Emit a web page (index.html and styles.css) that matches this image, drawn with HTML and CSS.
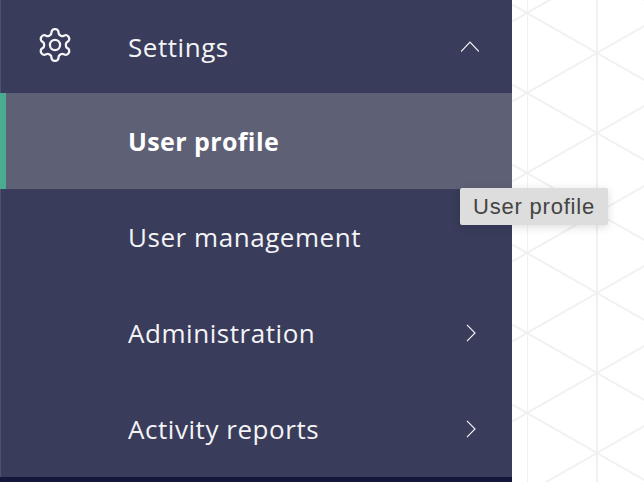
FILE: index.html
```html
<!DOCTYPE html>
<html lang="en">
<head>
<meta charset="utf-8">
<title>Settings</title>
<link rel="stylesheet" href="styles.css">
</head>
<body>
<div class="app">
  <nav class="sidebar">
    <div class="row head">
      <span class="icon-cell">
        <svg class="gear" viewBox="0 0 24 24" fill="none" stroke="currentColor" stroke-width="1.45" stroke-linejoin="round"><path d="M12.22 2h-.44a2 2 0 0 0-2 2v.18a2 2 0 0 1-1 1.73l-.43.25a2 2 0 0 1-2 0l-.15-.08a2 2 0 0 0-2.73.73l-.22.38a2 2 0 0 0 .73 2.73l.15.1a2 2 0 0 1 1 1.72v.51a2 2 0 0 1-1 1.74l-.15.09a2 2 0 0 0-.73 2.73l.22.38a2 2 0 0 0 2.73.73l.15-.08a2 2 0 0 1 2 0l.43.25a2 2 0 0 1 1 1.73V20a2 2 0 0 0 2 2h.44a2 2 0 0 0 2-2v-.18a2 2 0 0 1 1-1.73l.43-.25a2 2 0 0 1 2 0l.15.08a2 2 0 0 0 2.73-.73l.22-.39a2 2 0 0 0-.73-2.73l-.15-.08a2 2 0 0 1-1-1.74v-.5a2 2 0 0 1 1-1.74l.15-.09a2 2 0 0 0 .73-2.73l-.22-.38a2 2 0 0 0-2.73-.73l-.15.08a2 2 0 0 1-2 0l-.43-.25a2 2 0 0 1-1-1.73V4a2 2 0 0 0-2-2z"/><circle cx="12" cy="12" r="3.2"/></svg>
      </span>
      <span class="label">Settings</span>
      <svg class="chev chev-up" viewBox="0 0 20 20" fill="none" stroke="currentColor" stroke-width="1.3"><path d="M0 15 10 4.5 20 15"/></svg>
    </div>
    <a class="row item active"><span class="label">User profile</span></a>
    <a class="row item"><span class="label">User management</span></a>
    <a class="row item"><span class="label">Administration</span>
      <svg class="chev" viewBox="0 0 20 20" fill="none" stroke="currentColor" stroke-width="1.3"><path d="M5.5 1l9 9-9 9"/></svg></a>
    <a class="row item"><span class="label">Activity reports</span>
      <svg class="chev" viewBox="0 0 20 20" fill="none" stroke="currentColor" stroke-width="1.3"><path d="M5.5 1l9 9-9 9"/></svg></a>
    <div class="foot"></div>
  </nav>
  <main class="canvas">
    <svg class="pattern" width="100%" height="100%">
      <defs>
        <pattern id="tri" x="15" y="13" width="140" height="80" patternUnits="userSpaceOnUse">
          <path d="M0 0V80M70 0V80M0 0 70 40 0 80M140 0 70 40 140 80" fill="none" stroke="#f0f2f1" stroke-width="2"/>
        </pattern>
      </defs>
      <rect width="132" height="482" fill="url(#tri)"/>
    </svg>
  </main>
  <div class="tooltip">User profile</div>
</div>
</body>
</html>
```

FILE: styles.css
```css
html, body {
  margin: 0;
  padding: 0;
  height: 100%;
  overflow: hidden;
  background: #fff;
}

.app {
  position: relative;
  display: flex;
  width: 644px;
  height: 482px;
  overflow: hidden;
}

.sidebar {
  display: flex;
  flex-direction: column;
  flex: none;
  width: 512px;
  background: #393c5a;
  color: #f4f4f6;
  font-family: "Open Sans", "Noto Sans", sans-serif;
  font-size: 26px;
  letter-spacing: 0.55px;
  box-shadow: inset 1px 0 0 #4e506c;
}

.row {
  display: flex;
  align-items: center;
  flex: none;
  height: 96px;
  padding-left: 128px;
  padding-right: 32px;
  box-sizing: border-box;
  position: relative;
}

.head {
  height: 93px;
  padding-left: 0;
}

.icon-cell {
  display: flex;
  justify-content: center;
  width: 128px;
  padding-right: 18px;
  box-sizing: border-box;
}

.gear {
  width: 38px;
  height: 38px;
  margin-top: -3px;
}

.label {
  flex: 1;
}

.chev {
  width: 18px;
  height: 18px;
  flex: none;
}

.chev-up {
  margin-right: 1px;
}

.active {
  background: #5e6075;
  border-left: 6px solid #4aab92;
  padding-left: 122px;
  color: #fff;
  font-size: 25px;
  font-weight: 700;
  letter-spacing: 0.4px;
}

.foot {
  flex: 1;
  background: #14163c;
}

.canvas {
  flex: 1;
  position: relative;
  overflow: hidden;
}

.pattern {
  display: block;
}

.tooltip {
  position: absolute;
  left: 460px;
  top: 188px;
  width: 148px;
  height: 37px;
  line-height: 37px;
  text-align: center;
  background: #dcdddc;
  color: #444;
  font-family: "Liberation Sans", Arial, sans-serif;
  font-size: 22px;
  letter-spacing: 0.8px;
  border-radius: 2px;
  box-shadow: 0 2px 10px rgba(0, 0, 0, 0.14);
}
```
